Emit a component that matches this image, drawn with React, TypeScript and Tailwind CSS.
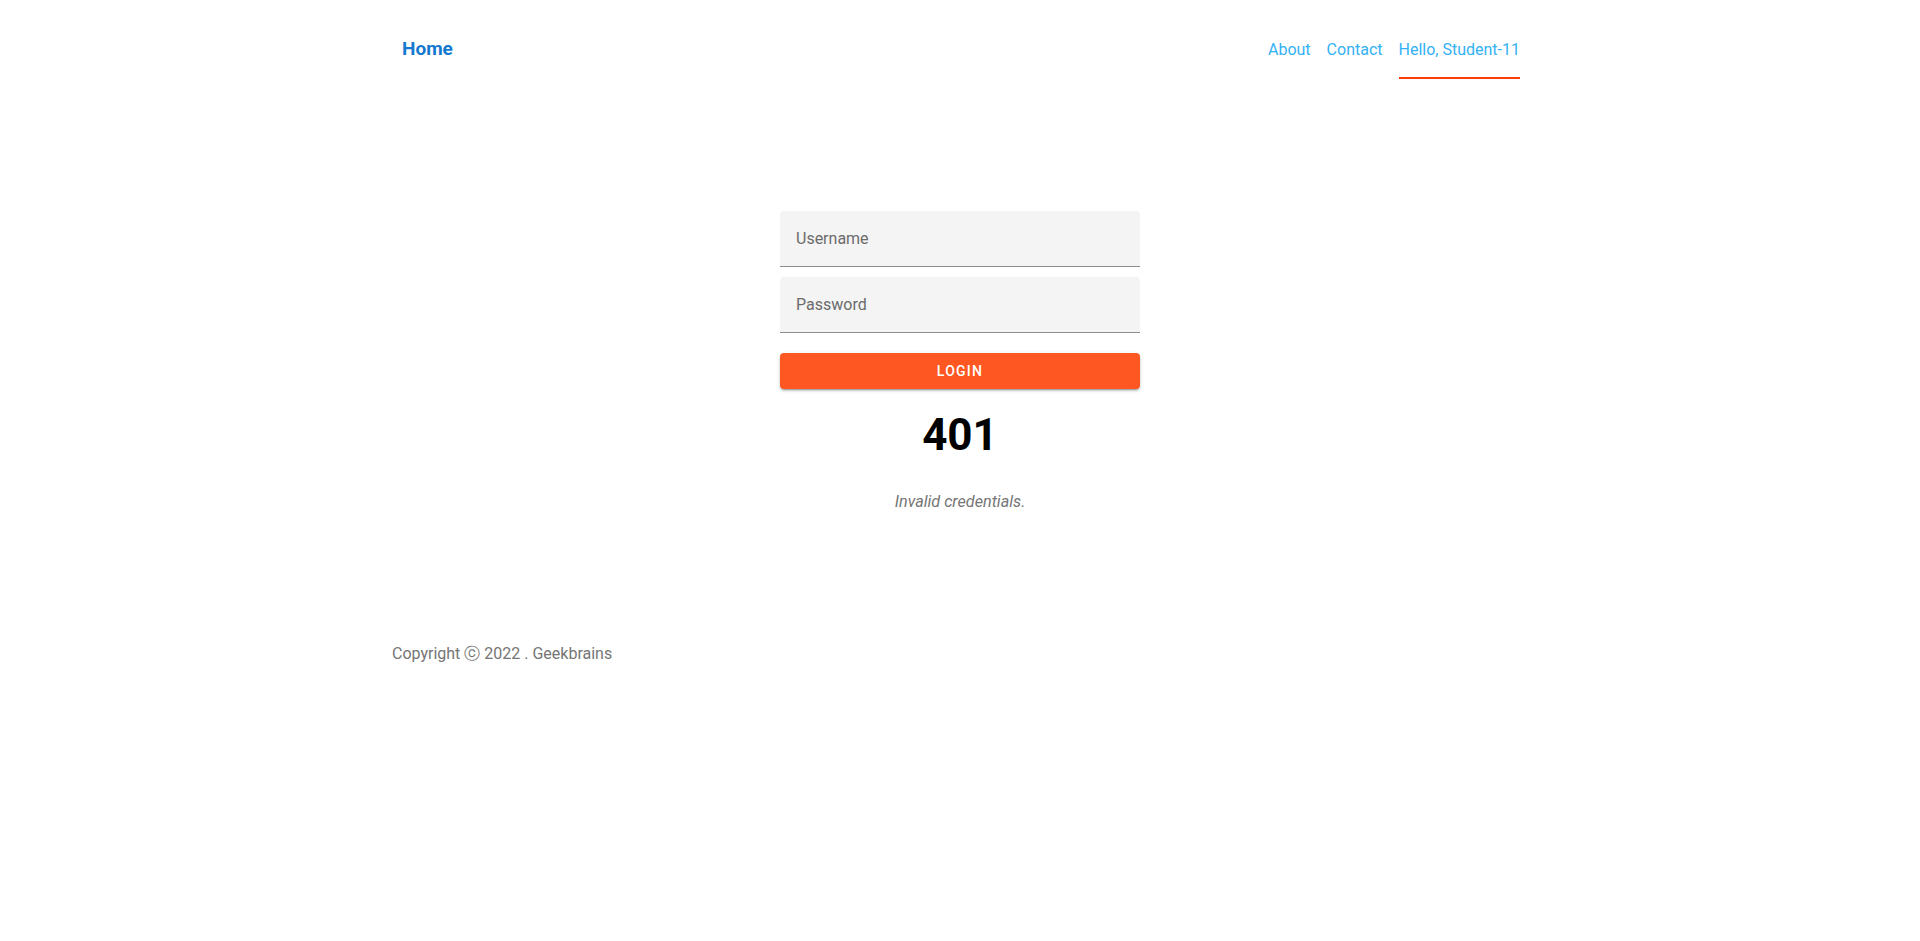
export default function App() {
  return (
    <div className="min-h-screen bg-white font-['Roboto',sans-serif] text-black">
      {/* Header */}
      <header className="mx-auto flex w-[1136px] items-baseline justify-between pt-[35px]">
        <a href="#" className="pl-[10px] text-[19px] font-bold text-[#1579cf]">
          Home
        </a>
        <nav className="flex items-baseline gap-4 pr-2 text-base leading-6 text-[#33b1f5]">
          <a href="#" className="border-b-2 border-transparent pb-[15px]">
            About
          </a>
          <a href="#" className="border-b-2 border-transparent pb-[15px]">
            Contact
          </a>
          <a href="#" className="border-b-2 border-[#ff3d00] pb-[15px]">
            Hello, Student-11
          </a>
        </nav>
      </header>

      {/* Login form */}
      <main className="mx-auto mt-[132px] flex w-[360px] flex-col">
        <div className="flex h-14 items-center rounded-t border-b border-[#8c8c8c] bg-[#f4f4f4] pl-4">
          <span className="text-base leading-6 text-[#6b6b6b]">Username</span>
        </div>
        <div className="mt-[10px] flex h-14 items-center rounded-t border-b border-[#8c8c8c] bg-[#f4f4f4] pl-4">
          <span className="text-base leading-6 text-[#6b6b6b]">Password</span>
        </div>
        <button className="mt-5 h-9 rounded bg-[#ff5722] text-sm font-medium uppercase tracking-[0.09em] text-white shadow-[0_3px_1px_-2px_rgba(0,0,0,0.2),0_2px_2px_0_rgba(0,0,0,0.14),0_1px_5px_0_rgba(0,0,0,0.12)]">
          Login
        </button>
        <h1 className="mt-6 text-center text-[44px] leading-[44px] font-bold">401</h1>
        <p className="mt-[33px] text-center text-[16.2px] leading-6 italic text-[#757575]">
          Invalid credentials.
        </p>
      </main>

      {/* Footer */}
      <footer className="mx-auto mt-[128px] w-[1136px] text-base leading-6 text-[#757575]">
        Copyright ⓒ 2022 . Geekbrains
      </footer>
    </div>
  )
}
